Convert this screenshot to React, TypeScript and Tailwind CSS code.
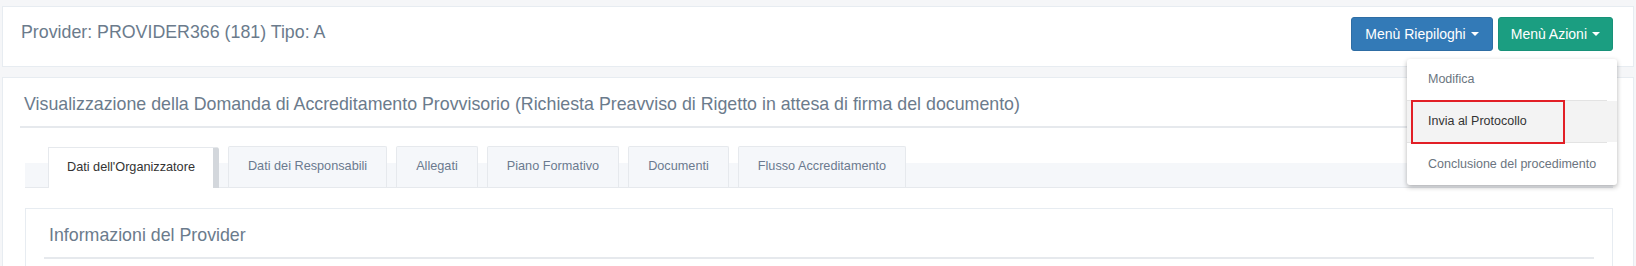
import React from "react";

const Caret = () => (
  <span className="inline-block ml-[5px] w-0 h-0 border-l-[4px] border-r-[4px] border-t-[4px] border-l-transparent border-r-transparent border-t-white align-middle" />
);

const tabs = [
  "Dati dell'Organizzatore",
  "Dati dei Responsabili",
  "Allegati",
  "Piano Formativo",
  "Documenti",
  "Flusso Accreditamento",
];

export default function App() {
  return (
    <div className="w-[1636px] h-[266px] overflow-hidden bg-[#f5f6f8] pt-[6px] px-[2px] font-['Liberation_Sans',Arial,sans-serif]">
      {/* Top panel */}
      <div className="relative z-10 h-[61px] bg-white border border-[#e7ecf1] flex items-start justify-between pl-[18px] pr-[20px]">
        <div className="pt-[15px] text-[17.8px] leading-[20px] text-[#6b7b8c]">
          Provider: PROVIDER366 (181) Tipo: A
        </div>
        <div className="relative mt-[10px] flex gap-[5px]">
          <button className="h-[34px] px-[13px] rounded-[3px] bg-[#337ab7] border border-[#2e6da4] text-white text-[14px] leading-[20px] flex items-center">
            Menù Riepiloghi
            <Caret />
          </button>
          <button className="h-[34px] px-[12px] rounded-[3px] bg-[#1b9e81] border border-[#189279] text-white text-[14px] leading-[20px] flex items-center">
            Menù Azioni
            <Caret />
          </button>
          {/* Dropdown */}
          <div className="absolute right-[-4px] top-[42px] w-[210px] bg-white rounded-[3px] shadow-[0_2px_5px_rgba(0,0,0,0.3)] text-[12.5px]">
            <div className="h-[41px] flex items-center pl-[21px] text-[#6b7580]">Modifica</div>
            <div className="h-px bg-[#e3e3e3] mr-[10px]" />
            <div className="h-[41px] flex items-center pl-[21px] text-[#333333] bg-[#f3f3f3]">Invia al Protocollo</div>
            <div className="h-px bg-[#e3e3e3] mr-[10px]" />
            <div className="h-[42px] flex items-center pl-[21px] text-[#6b7580]">Conclusione del procedimento</div>
            <div className="absolute left-[4px] top-[41px] w-[154px] h-[44px] border-2 border-[#e21f26]" />
          </div>
        </div>
      </div>

      {/* Second panel */}
      <div className="mt-[10px] h-[300px] bg-white border border-[#e7ecf1] px-[17px]">
        <div className="pt-[16px] pb-[12px] border-b-2 border-[#e6e9ed]">
          <div className="pl-[4px] text-[17.8px] leading-[20px] text-[#6b7b8c]">
            Visualizzazione della Domanda di Accreditamento Provvisorio (Richiesta Preavviso di Rigetto in attesa di firma del documento)
          </div>
        </div>

        <div className="ml-[5px] mr-[3px]">
          {/* Tabs */}
          <div className="mt-[18px] h-[42px] flex items-end gap-[9px] pl-[23px] border-b border-[#e6e9ed] bg-[linear-gradient(to_bottom,transparent_17px,#f5f7fa_17px)]">
            {tabs.map((t, i) =>
              i === 0 ? (
                <div
                  key={t}
                  className="h-[41px] -mb-px pl-[18px] pr-[18px] bg-white border-t border-l border-[#e6e9ed] border-r-[6px] border-r-[#d3d7dc] rounded-tr-[3px] flex items-center text-[12.7px] text-[#333333]"
                >
                  {t}
                </div>
              ) : (
                <div
                  key={t}
                  className="h-[41px] px-[19px] bg-[#f5f7fa] border border-b-0 border-[#e6e9ed] rounded-t-[2px] flex items-center text-[12.7px] text-[#6b7a8f]"
                >
                  {t}
                </div>
              )
            )}
          </div>

          {/* Inner panel */}
          <div className="mt-[20px] h-[200px] border border-[#e7ecf1] px-[18px]">
            <div className="pt-[16px] pb-[12px] border-b-2 border-[#e6e9ed]">
              <div className="pl-[5px] text-[17.8px] leading-[20px] text-[#6b7b8c]">Informazioni del Provider</div>
            </div>
          </div>
        </div>
      </div>
    </div>
  );
}
